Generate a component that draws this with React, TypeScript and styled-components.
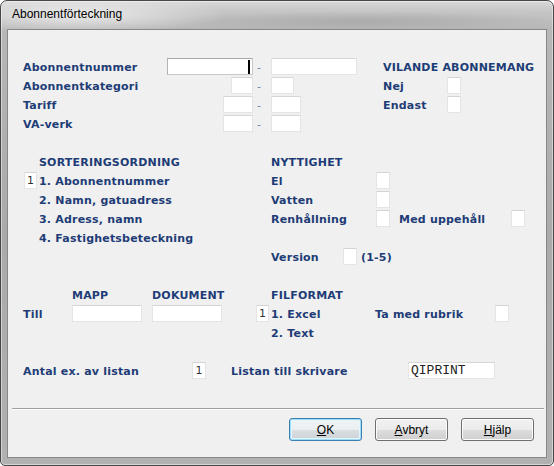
import React from "react";
import styled, { createGlobalStyle, css } from "styled-components";

const GlobalStyle = createGlobalStyle`
  html, body { margin: 0; padding: 0; background: #ffffff; }
  * { box-sizing: border-box; }
`;

const LABEL_BLUE = "#1e3c76";

const Window = styled.div`
  width: 554px;
  height: 466px;
  border: 1px solid #474747;
  border-radius: 7px 7px 5px 5px;
  overflow: hidden;
  display: flex;
  flex-direction: column;
  background:
    radial-gradient(ellipse 150px 20px at 75px 13px, rgba(236, 236, 236, 0.95), rgba(236, 236, 236, 0) 100%),
    radial-gradient(ellipse 200px 10px at 360px 20px, rgba(150, 150, 150, 0.45), rgba(150, 150, 150, 0) 100%),
    linear-gradient(180deg, #d9d9d9 0px, #c6c6c6 10px, #b7b7b7 28px, #aaaaaa 50%, #b1b1b1 100%);
  box-shadow: inset 0 0 0 1px rgba(255, 255, 255, 0.45);
`;

const TitleBar = styled.div`
  height: 28px;
  flex: none;
  display: flex;
  align-items: center;
  padding: 0 0 2px 11px;
`;

const Title = styled.span`
  font-family: "Liberation Sans", Arial, sans-serif;
  font-size: 12px;
  color: #000;
`;

const Client = styled.div`
  height: 429px;
  flex: none;
  margin: 0 6px;
  border: 1px solid #878787;
  background: #f0f0f0;
  display: flex;
  flex-direction: column;
  padding: 27px 12px 15px 15px;
`;

const Sections = styled.div`
  display: flex;
  flex-direction: column;
  gap: 19px;
`;

const Grid = styled.div<{ $cols: string; $rows: number }>`
  display: grid;
  grid-template-columns: ${(p) => p.$cols};
  grid-template-rows: repeat(${(p) => p.$rows}, 19px);
  align-items: center;
`;

type Place = { $c?: string; $r?: number; $end?: boolean; $ml?: number };

const place = css<Place>`
  ${(p) => (p.$c ? `grid-column: ${p.$c};` : "")}
  ${(p) => (p.$r ? `grid-row: ${p.$r};` : "")}
  ${(p) => (p.$end ? "justify-self: end;" : "")}
  ${(p) => (p.$ml ? `margin-left: ${p.$ml}px;` : "")}
`;

const Label = styled.span<Place>`
  font-family: "DejaVu Sans", Verdana, sans-serif;
  font-weight: bold;
  font-size: 11px;
  letter-spacing: 0.2px;
  color: ${LABEL_BLUE};
  white-space: nowrap;
  line-height: 17px;
  padding-top: 2px;
  ${place}
`;

const Dash = styled.span`
  font-family: "DejaVu Sans", Verdana, sans-serif;
  font-size: 11px;
  color: #7285a6;
  padding: 1px 0 0 4px;
`;

const Field = styled.div<Place & { $w: number; $focused?: boolean; $mono?: boolean }>`
  width: ${(p) => p.$w}px;
  height: 17px;
  background: #ffffff;
  border: 1px solid #e4e4e4;
  border-top-color: #d6d6d6;
  display: flex;
  align-items: center;
  padding: 0 2px;
  font-family: ${(p) => (p.$mono ? '"Liberation Mono", "Courier New", monospace' : '"DejaVu Sans", Verdana, sans-serif')};
  font-size: ${(p) => (p.$mono ? "13px" : "11px")};
  color: #222;
  ${(p) =>
    p.$focused &&
    css`
      border-color: #c9c9c9;
      border-top-color: #a9a9a9;
      border-left-color: #b4b4b4;
      justify-content: flex-end;
    `}
  ${place}
`;

const Caret = styled.span`
  width: 2px;
  height: 14px;
  background: #000;
`;

const Box = styled.div<Place & { $w?: number }>`
  width: ${(p) => p.$w ?? 14}px;
  height: 17px;
  background: #ffffff;
  border: 1px solid #e4e4e4;
  border-top-color: #d4d4d4;
  display: flex;
  align-items: center;
  justify-content: center;
  font-family: "DejaVu Sans", Verdana, sans-serif;
  font-size: 11px;
  color: #333;
  ${place}
`;

const VersionCell = styled.div`
  grid-column: 3 / span 4;
  grid-row: 6;
  display: flex;
  align-items: center;
`;

const VersionLabel = styled(Label)`
  width: 72px;
`;

const Hint = styled(Label)`
  margin-left: 4px;
`;

const Separator = styled.div`
  margin: 28px -10px 0 -11px;
  height: 2px;
  border-top: 1px solid #a0a0a0;
  border-bottom: 1px solid #ffffff;
`;

const ButtonRow = styled.div`
  margin-top: 8px;
  display: flex;
  justify-content: flex-end;
  gap: 13px;
`;

const Button = styled.button<{ $primary?: boolean }>`
  width: 73px;
  height: 23px;
  padding: 0;
  border: 1px solid #707070;
  border-radius: 3px;
  background: linear-gradient(180deg, #f2f2f2 0%, #ebebeb 50%, #dddddd 51%, #cfcfcf 100%);
  box-shadow: inset 0 0 0 1px #fbfbfb;
  font-family: "Liberation Sans", Arial, sans-serif;
  font-size: 12px;
  color: #000;
  ${(p) =>
    p.$primary &&
    css`
      border-color: #3c7fb1;
      box-shadow: inset 0 0 0 1px #9fdcf7, inset 0 0 0 2px #e3f5fd;
      background: linear-gradient(180deg, #f2f4f5 0%, #eaeff1 50%, #dadfe2 51%, #ccd2d6 100%);
    `}
`;

const Key = styled.span`
  text-decoration: underline;
`;

const BottomFrame = styled.div`
  flex: 1;
`;

export default function App() {
  return (
    <>
      <GlobalStyle />
      <Window>
        <TitleBar>
          <Title>Abonnentförteckning</Title>
        </TitleBar>
        <Client>
          <Sections>
            <Grid $cols="144px 86px 18px 86px 26px 64px 16px" $rows={4}>
              <Label $c="1" $r={1}>Abonnentnummer</Label>
              <Field $w={86} $focused>
                <Caret />
              </Field>
              <Dash>-</Dash>
              <Field $w={86} />
              <Label $c="6 / span 2">VILANDE ABONNEMANG</Label>

              <Label $c="1" $r={2}>Abonnentkategori</Label>
              <Field $w={22} $end />
              <Dash>-</Dash>
              <Field $w={23} />
              <Label $c="6">Nej</Label>
              <Box />

              <Label $c="1" $r={3}>Tariff</Label>
              <Field $w={30} $end />
              <Dash>-</Dash>
              <Field $w={30} />
              <Label $c="6">Endast</Label>
              <Box />

              <Label $c="1" $r={4}>VA-verk</Label>
              <Field $w={30} $end />
              <Dash>-</Dash>
              <Field $w={30} />
            </Grid>

            <Grid $cols="16px 232px 104px 24px 112px 16px" $rows={6}>
              <Label $c="2" $r={1}>SORTERINGSORDNING</Label>
              <Label $c="3" $r={1}>NYTTIGHET</Label>

              <Box $c="1" $r={2} $w={13} $ml={1}>1</Box>
              <Label $c="2" $r={2}>1. Abonnentnummer</Label>
              <Label $c="3" $r={2}>El</Label>
              <Box $c="4" $r={2} $ml={1} />

              <Label $c="2" $r={3}>2. Namn, gatuadress</Label>
              <Label $c="3" $r={3}>Vatten</Label>
              <Box $c="4" $r={3} $ml={1} />

              <Label $c="2" $r={4}>3. Adress, namn</Label>
              <Label $c="3" $r={4}>Renhållning</Label>
              <Box $c="4" $r={4} $ml={1} />
              <Label $c="5" $r={4}>Med uppehåll</Label>
              <Box $c="6" $r={4} />

              <Label $c="2" $r={5}>4. Fastighetsbeteckning</Label>

              <VersionCell>
                <VersionLabel>Version</VersionLabel>
                <Box />
                <Hint>(1-5)</Hint>
              </VersionCell>
            </Grid>

            <Grid $cols="48px 80px 105px 15px 104px 120px 16px" $rows={3}>
              <Label $c="2" $r={1} $ml={1}>MAPP</Label>
              <Label $c="3" $r={1} $ml={1}>DOKUMENT</Label>
              <Label $c="5" $r={1}>FILFORMAT</Label>

              <Label $c="1" $r={2}>Till</Label>
              <Field $c="2" $r={2} $w={70} $ml={1} />
              <Field $c="3" $r={2} $w={70} $ml={1} />
              <Box $c="4" $r={2} $w={13}>1</Box>
              <Label $c="5" $r={2}>1. Excel</Label>
              <Label $c="6" $r={2}>Ta med rubrik</Label>
              <Box $c="7" $r={2} />

              <Label $c="5" $r={3}>2. Text</Label>
            </Grid>

            <Grid $cols="168px 40px 176px 90px" $rows={1}>
              <Label>Antal ex. av listan</Label>
              <Box $ml={1}>1</Box>
              <Label>Listan till skrivare</Label>
              <Field $w={87} $ml={1} $mono>
                QIPRINT
              </Field>
            </Grid>
          </Sections>

          <Separator />

          <ButtonRow>
            <Button $primary>
              <Key>O</Key>K
            </Button>
            <Button>
              <Key>A</Key>vbryt
            </Button>
            <Button>
              <Key>H</Key>jälp
            </Button>
          </ButtonRow>
        </Client>
        <BottomFrame />
      </Window>
    </>
  );
}
